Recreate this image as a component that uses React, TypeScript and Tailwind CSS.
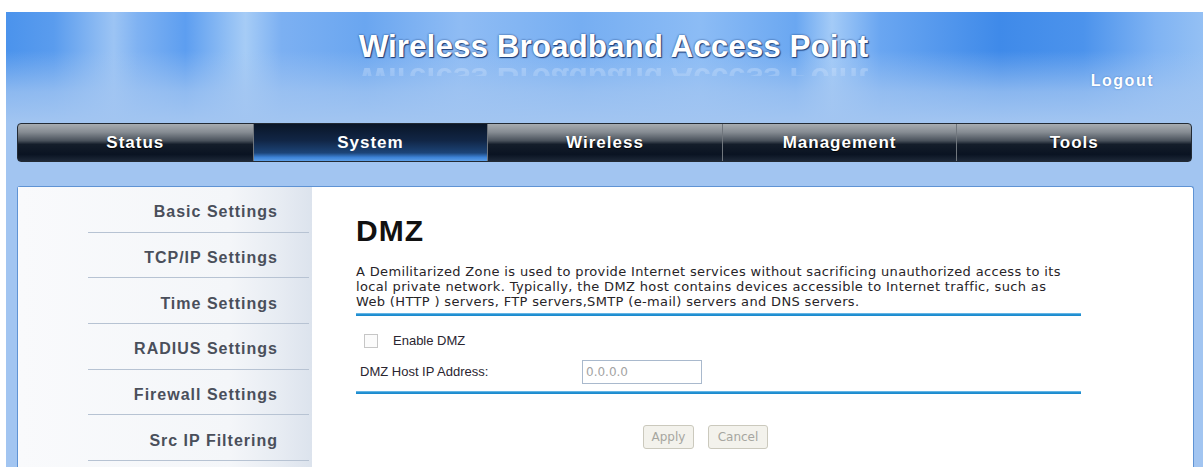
import React from "react";

const tabs = ["Status", "System", "Wireless", "Management", "Tools"];

const sideMenu = [
  "Basic Settings",
  "TCP/IP Settings",
  "Time Settings",
  "RADIUS Settings",
  "Firewall Settings",
  "Src IP Filtering",
];

function BlueRule() {
  return <div className="h-[3px] w-[725px] bg-[linear-gradient(180deg,#8fcbef_0%,#2595d6_40%,#1a86c9_100%)]" />;
}

function Header() {
  return (
    <div className="relative h-[111px] bg-[linear-gradient(180deg,rgba(162,197,241,0)_35%,rgba(162,197,241,0.75)_72%,#a2c5f1_100%),linear-gradient(90deg,#4b93ec_0%,#5a9cee_4%,#9cc4f4_9%,#7fb2f2_11%,#5d9ef0_15%,#a6ccf6_20%,#7cb0f2_23%,#6aa6f0_30%,#8fbcf4_38%,#76aef2_48%,#8cbcf5_58%,#6aa7f1_66%,#a4cbf7_69%,#6aa6f1_73%,#3f8ae9_83%,#4c93ec_90%,#7fb3f3_96%,#94c0f4_100%)]">
      <div className="flex flex-col items-center pt-[16px] pl-[18px] font-['Liberation_Sans',Arial,sans-serif]">
        <h1 className="text-[31.5px] leading-[36px] font-bold text-white [text-shadow:0_0_2px_#1b3d78,1px_1px_1px_#1b3d78]">
          Wireless Broadband Access Point
        </h1>
        {/* faded mirror of the title */}
        <div aria-hidden="true" className="h-[12px] overflow-hidden">
          <div className="-scale-y-100 text-[31.5px] leading-[30px] font-bold text-[#cfe2fb] opacity-45 [mask-image:linear-gradient(0deg,black,transparent)]">
            Wireless Broadband Access Point
          </div>
        </div>
      </div>
      <a className="absolute right-[49px] top-[57px] font-['Liberation_Sans',Arial,sans-serif] text-[16px] font-bold tracking-[1.5px] text-white [text-shadow:0_0_2px_#4a7fc4]">
        Logout
      </a>
    </div>
  );
}

function NavBar() {
  return (
    <div className="ml-[11px] w-[1175px] grid grid-cols-5 h-[39px] rounded-[4px] border border-[#222a34] overflow-hidden bg-[linear-gradient(180deg,#a7acb1_0%,#868c93_22%,#4a525c_45%,#141d2a_55%,#0a1322_82%,#1d2838_100%)] font-['Liberation_Sans',Arial,sans-serif]">
      {tabs.map((tab, i) => (
        <div
          key={tab}
          className={
            tab === "System"
              ? "flex items-center justify-center border-l border-[#70767d] bg-[linear-gradient(180deg,#0a1628_0%,#112646_45%,#1c4478_78%,#3c82d6_90%,#5c9fe8_100%)] text-[17px] font-bold tracking-[1px] text-white"
              : i === 0
              ? "flex items-center justify-center text-[17px] font-bold tracking-[1px] text-white [text-shadow:0_1px_1px_#000]"
              : "flex items-center justify-center border-l border-[#70767d] text-[17px] font-bold tracking-[1px] text-white [text-shadow:0_1px_1px_#000]"
          }
        >
          {tab}
        </div>
      ))}
    </div>
  );
}

function SideMenu() {
  return (
    <div className="w-[294px] shrink-0 bg-[linear-gradient(90deg,#f9fafc_0%,#f4f6f9_72%,#e6ebf2_90%,#dce3ed_100%)] font-['Liberation_Sans',Arial,sans-serif]">
      {sideMenu.map((item) => (
        <div
          key={item}
          className="ml-[70px] mr-[3px] h-[45.7px] flex items-center justify-end pt-[6px] pr-[31px] border-b border-[#b7c3d3] text-[16px] font-bold tracking-[1px] text-[#4a4f5b]"
        >
          {item}
        </div>
      ))}
    </div>
  );
}

function DmzForm() {
  return (
    <div className="pl-[44px] pt-[29px]">
      <h2 className="font-['Liberation_Sans',Arial,sans-serif] text-[30px] leading-[30px] font-bold tracking-[1px] text-[#111]">
        DMZ
      </h2>
      <p className="mt-[18px] font-['DejaVu_Sans',Verdana,sans-serif] text-[13px] leading-[15px] tracking-[0.35px] text-[#272428] whitespace-nowrap">
        A Demilitarized Zone is used to provide Internet services without sacrificing unauthorized access to its
        <br />
        local private network. Typically, the DMZ host contains devices accessible to Internet traffic, such as
        <br />
        Web (HTTP ) servers, FTP servers,SMTP (e-mail) servers and DNS servers.
      </p>
      <div className="mt-[4px]">
        <BlueRule />
      </div>
      <div className="font-['Liberation_Sans',Arial,sans-serif] text-[13px] text-[#2a2530]">
        <div className="mt-[12px] h-[26px] flex items-center pl-[8px]">
          <span className="h-[14px] w-[14px] border border-[#c6c6c6] bg-[#fbfbfb]" />
          <span className="ml-[15px]">Enable DMZ</span>
        </div>
        <div className="mt-[4px] h-[28px] flex items-center pl-[4px]">
          <span className="w-[222px]">DMZ Host IP Address:</span>
          <div className="h-[24px] w-[120px] border border-[#a9b9cd] bg-white flex items-center pl-[3px] font-['DejaVu_Sans',Verdana,sans-serif] text-[12px] text-[#a3a3a3]">
            0.0.0.0
          </div>
        </div>
      </div>
      <div className="mt-[5px]">
        <BlueRule />
      </div>
      <div className="mt-[31px] pl-[287px] flex gap-[14px] font-['DejaVu_Sans',Verdana,sans-serif] text-[12px] text-[#a6a6a0]">
        <button className="h-[24px] w-[51px] rounded-[3px] border border-[#cbc9bd] bg-[#f3f2ec]">Apply</button>
        <button className="h-[24px] w-[60px] rounded-[3px] border border-[#cbc9bd] bg-[#f3f2ec]">Cancel</button>
      </div>
    </div>
  );
}

export default function App() {
  return (
    <div className="min-h-[467px] bg-white pt-[12px] pl-[6px] overflow-hidden">
      <div className="min-h-[455px] bg-[#a2c5f1]">
        <Header />
        <NavBar />
        <div className="ml-[11px] mt-[24px] w-[1177px] h-[300px] flex rounded-t-[3px] border border-b-0 border-[#5f93d4] bg-white">
          <SideMenu />
          <div className="flex-1">
            <DmzForm />
          </div>
        </div>
      </div>
    </div>
  );
}
